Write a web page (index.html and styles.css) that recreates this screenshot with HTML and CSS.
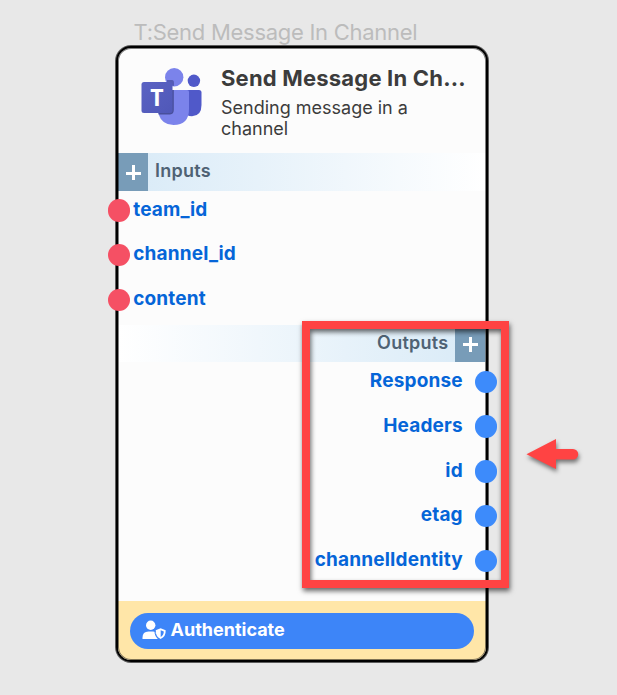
FILE: index.html
```html
<!DOCTYPE html>
<html lang="en">
<head>
<meta charset="utf-8">
<title>Send Message In Channel</title>
<link rel="stylesheet" href="styles.css">
</head>
<body>
<main class="canvas">
  <div class="caption"><span>T:Send Message In Channel</span></div>
  <article class="node">
    <header class="head">
      <svg class="logo" viewBox="0 0 62 58" width="62" height="58">
        <defs>
          <linearGradient id="tile" x1="0" y1="0" x2="1" y2="1"><stop offset="0" stop-color="#5a62c3"/><stop offset="1" stop-color="#5058b8"/></linearGradient>
          <clipPath id="torso"><path d="M18 22H47.5Q49 22 49 24V41Q49 57 33.500 57Q22 57 18.500 46Z"/></clipPath>
        </defs>
        <circle cx="53.900" cy="12.800" r="6.200" fill="#5059c9"/>
        <path d="M47 22H59Q61.500 22 61.500 24.500V37Q61.500 48 52 48.300Q49 48.300 47 47Z" fill="#5059c9"/>
        <circle cx="34.200" cy="9.300" r="9.200" fill="#7b83eb"/>
        <path d="M18 22H47Q49 22 49 24V41Q49 57 33.500 57Q22 57 18.500 46Z" fill="#7b83eb"/>
        <path d="M27 12H32Q34 12 34 15V18Q31 18 27 15Z" fill="#555cb5"/>
        <path clip-path="url(#torso)" d="M18 20H33.800V42Q33.800 46 30 46.500H18Z" fill="#484f9c"/>
        <rect x="1.500" y="14" width="31" height="31" rx="2.500" fill="url(#tile)"/>
        <text x="17" y="37.700" class="logo-letter">T</text>
      </svg>
      <div class="titles">
        <h1><span>Send Message In Ch...</span></h1>
        <p>Sending message in a channel</p>
      </div>
    </header>
    <section>
      <div class="bar"><i class="plus"></i><span>Inputs</span></div>
      <ul class="ports in">
        <li><b></b><span>team_id</span></li>
        <li><b></b><span>channel_id</span></li>
        <li><b></b><span>content</span></li>
      </ul>
    </section>
    <section>
      <div class="bar out-bar"><span>Outputs</span><i class="plus"></i></div>
      <ul class="ports out">
        <li><span>Response</span><b></b></li>
        <li><span>Headers</span><b></b></li>
        <li><span>id</span><b></b></li>
        <li><span>etag</span><b></b></li>
        <li><span>channelIdentity</span><b></b></li>
      </ul>
    </section>
    <footer class="foot">
      <button class="auth">
        <svg viewBox="0 0 24 20" width="24" height="20">
          <circle cx="8.700" cy="5.200" r="4.700" fill="#fff"/>
          <path d="M.5 18.900V17.500Q.5 11.500 6.500 11.500H11Q12.500 11.500 13.500 12Q13.400 16.500 16.200 18.900Z" fill="#fff"/>
          <path d="M18.600 8.200L23.700 10.200Q24 16.500 18.600 19Q13.400 16.500 13.600 10.200Z" fill="#fff"/>
          <path d="M18.700 10.300L21.800 11.500Q21.700 15.200 18.700 16.900Z" fill="#3d85f8"/>
          <path d="M13 10.500Q12.800 16.500 16.800 19.200" fill="none" stroke="#3d85f8" stroke-width="1"/>
        </svg>
        <span>Authenticate</span>
      </button>
    </footer>
  </article>
  <div class="highlight"></div>
  <svg class="arrow" viewBox="0 0 70 50" width="70" height="50">
    <path d="M6.500 24.300L36 9V19H53A5.200 5.200 0 0 1 53 29.500H36V39Z" fill="#ff4343"/>
  </svg>
</main>
</body>
</html>
```
FILE: styles.css
```css
* { box-sizing: border-box; }
body { margin: 0; background: #e8e8e8; font-family: Inter, sans-serif; }
.canvas { position: relative; width: 617px; height: 695px; overflow: hidden; padding: 19px 129px 0 116px; }
.caption { height: 27px; padding-left: 17.500px; font-size: 22px; line-height: 27px; letter-spacing: -.28px; color: #bcbcbc; white-space: nowrap; }
.node { position: relative; height: 616px; border: 2px solid #000; border-radius: 15px; background: #fcfcfc; box-shadow: 0 0 0 1px rgba(0,0,0,.6); display: flex; flex-direction: column; }
.node::after { content: ""; position: absolute; inset: 0; border-radius: 13px; box-shadow: inset 0 0 0 1px rgba(0,0,0,.5); pointer-events: none; }
.head { height: 105px; display: flex; padding: 20px 0 0 22px; gap: 19px; }
.logo { flex: none; }
.logo-letter { font: 700 23px "Open Sans", sans-serif; fill: #fff; text-anchor: middle; }
.titles { width: 248px; color: #3c3c3c; }
h1 { margin: -3px 0 0; font-size: 22px; line-height: 27px; letter-spacing: .2px; font-weight: 700; white-space: nowrap; }
p { margin: 5px 0 0; width: 200px; font-size: 18px; line-height: 21px; }
.bar { height: 37.500px; display: flex; align-items: stretch; background: linear-gradient(90deg, #d8eaf7, #fff); color: #4f6274; font-size: 18px; line-height: 36px; font-weight: 600; letter-spacing: .25px; gap: 7px; }
.out-bar { justify-content: flex-end; padding-right: .6px; background: linear-gradient(270deg, #d8eaf7, #fff); }
.plus { width: 30px; flex: none; background: linear-gradient(#fff, #fff) 50% 54%/15px 3px no-repeat, linear-gradient(#fff, #fff) 50% 54%/3px 15px no-repeat, #789cb8; }
.ports { margin: 0; padding: 0; list-style: none; color: #0565d8; font-size: 19px; font-weight: 700; letter-spacing: .17px; }
.ports li { height: 44.800px; display: flex; align-items: flex-start; padding-top: 8.300px; line-height: 22px; gap: 3px; }
.ports span { margin-top: -.3px; }
.ports b { width: 22.500px; height: 22.500px; margin-top: .3px; border-radius: 50%; background: #f55064; position: relative; z-index: 1; }
.in li { margin-left: -10.300px; }
.in { height: 134px; }
.out { height: 238.500px; }
.out li { justify-content: flex-end; margin-right: -11.300px; gap: 12px; }
.out b { background: #3d8bfb; }
.foot { flex: 1; background: #ffe6a8; border-radius: 0 0 13px 13px; padding: 12px 12px 0; }
.auth { width: 344px; height: 36px; border: 0; border-radius: 18px; background: #3d85f8; color: #fff; font: 700 18px/34px Inter, sans-serif; padding: 0 0 1px 11.500px; display: flex; align-items: center; gap: 5px; }
.highlight { position: absolute; z-index: 2; left: 302px; top: 321px; width: 207px; height: 267px; border: 8px solid #ff4343; box-shadow: 1px 3px 5px rgba(0,0,0,.6), inset 1px 3px 5px rgba(0,0,0,.6); }
.arrow { position: absolute; left: 520px; top: 430px; filter: drop-shadow(1px 3px 2px rgba(0,0,0,.5)); }
```
